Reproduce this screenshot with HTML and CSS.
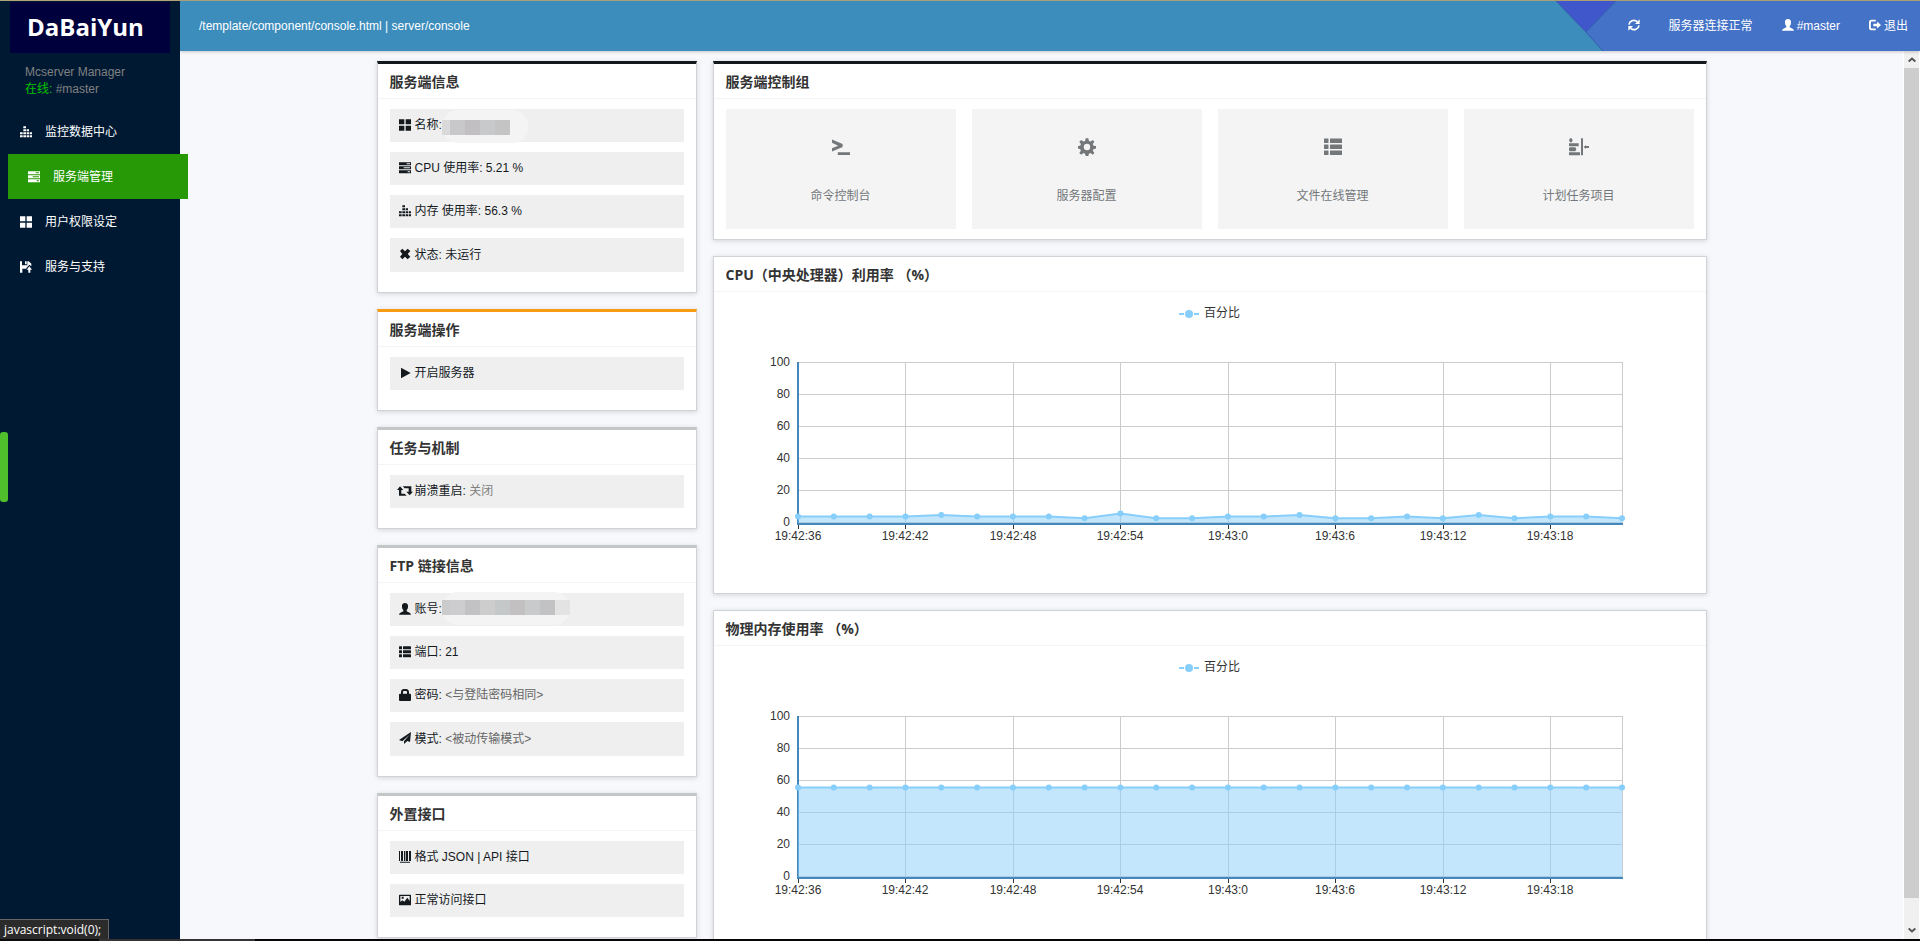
FILE: index.html
```html
<!DOCTYPE html>
<html lang="zh-CN">
<head>
<meta charset="utf-8">
<title>Mcserver Manager</title>
<link rel="stylesheet" href="styles.css">
</head>
<body>
<svg class="sprite" aria-hidden="true">
  <symbol id="i-equalizer" viewBox="0 0 36 36"><path d="M0 28h8v6H0zM0 19h8v6H0zM10 28h8v6h-8zM10 19h8v6h-8zM10 10h8v6h-8zM10 1h8v6h-8zM20 28h7v6h-7zM20 19h7v6h-7zM20 10h7v6h-7zM29 28h7v6h-7zM29 19h7v6h-7z"/></symbol>
  <symbol id="i-tasks" viewBox="0 0 36 36"><path fill-rule="evenodd" d="M0 1h36v9H0zM23 4v3h10V4zM0 13h36v9H0zM14 16v3h19v-3zM0 25h36v9H0zM26 28v3h7v-3z"/></symbol>
  <symbol id="i-grid" viewBox="0 0 36 36"><path d="M0 1h16v15H0zM20 1h16v15H20zM0 20h16v15H0zM20 20h16v15H20z"/></symbol>
  <symbol id="i-floppy" viewBox="0 0 36 36"><path d="M0 1h6v12h16V1h4l8 7v8l-6-5-9 10v2H7v12H0zM15 1h5v9h-5zM28 16l8 10h-5v9h-6v-9h-5z"/></symbol>
  <symbol id="i-refresh" viewBox="0 0 36 36"><path fill="none" stroke="currentColor" stroke-width="5" d="M3 17C4 7 17-1 28 8M33 19C32 29 19 37 8 28"/><path d="M35 1v14H21zM1 35V21h14z"/></symbol>
  <symbol id="i-user" viewBox="0 0 36 36"><path d="M18 0c6 0 10 4 9 11 0 5-2 8-4 10v4c3 2 12 4 13 10H0c1-6 10-8 13-10v-4c-2-2-4-5-4-10C8 4 12 0 18 0z"/></symbol>
  <symbol id="i-logout" viewBox="0 0 39 36"><path d="M22 1v6H10c-3 0-4 1-4 4v14c0 3 1 4 4 4h12v6H8c-6 0-8-3-8-8V9c0-5 2-8 8-8zM26 7l13 11-13 11v-7H14v-8h12z"/></symbol>
  <symbol id="i-remove" viewBox="0 0 36 36"><path d="M10 2l8 8 8-8 8 7-8 9 8 8-8 8-8-8-8 8-7-8 7-8-7-9z"/></symbol>
  <symbol id="i-play" viewBox="0 0 36 36"><path d="M6 2l29 16L6 34z"/></symbol>
  <symbol id="i-retweet" viewBox="0 0 48 36"><path d="M9 4l10 11h-6v11h10l6 6H6V15H0zM17 4h26v16h5L38 31 28 20h7V10H23z"/></symbol>
  <symbol id="i-list" viewBox="0 0 36 36"><path d="M1 1h7q1 0 1 1v7q0 1-1 1H1q-1 0-1-1V2q0-1 1-1zM13 1h22q1 0 1 1v7q0 1-1 1H13q-1 0-1-1V2q0-1 1-1zM1 13h7q1 0 1 1v7q0 1-1 1H1q-1 0-1-1v-7q0-1 1-1zM13 13h22q1 0 1 1v7q0 1-1 1H13q-1 0-1-1v-7q0-1 1-1zM1 25h7q1 0 1 1v7q0 1-1 1H1q-1 0-1-1v-7q0-1 1-1zM13 25h22q1 0 1 1v7q0 1-1 1H13q-1 0-1-1v-7q0-1 1-1z"/></symbol>
  <symbol id="i-lock" viewBox="0 0 36 36"><path fill-rule="evenodd" d="M6 14V9c0-5 4-9 9-9h6c5 0 9 4 9 9v5h3c2 0 3 1 3 3v16c0 2-1 3-3 3H3c-2 0-3-1-3-3V17c0-2 1-3 3-3zM12 14h12V9c0-2-1-3-3-3h-6c-2 0-3 1-3 3z"/></symbol>
  <symbol id="i-send" viewBox="0 0 36 36"><path d="M0 24L36 0 33 30 25 27 15 36V28L32 8 10 28z"/></symbol>
  <symbol id="i-barcode" viewBox="0 0 36 36"><path d="M0 0h3v30H0zM6 0h6v30H6zM15 0h3v30h-3zM20 0h7v30h-7zM30 0h6v30h-6zM3 32h30v3H3z"/></symbol>
  <symbol id="i-picture" viewBox="0 0 36 36"><path fill-rule="evenodd" d="M2 2h32q2 0 2 2v28q0 2-2 2H2q-2 0-2-2V4q0-2 2-2zM4 6v18l6-5 6 4 9-12 7 10V6zM8 8h6v6H8z"/></symbol>
  <symbol id="i-terminal" viewBox="0 0 56 56"><path d="M0 5l33 14v9L0 42v-10l19-8L0 15zM18 44h38v9H18z"/></symbol>
  <symbol id="i-cog" viewBox="0 0 56 56"><path fill-rule="evenodd" d="M24 1h8l2 8 5 2 7-5 5 6-5 7 2 5 8 1v8l-8 2-2 5 5 7-5 5-7-5-5 2-2 7h-8l-2-7-5-2-7 5-6-5 5-7-2-5-7-2v-8l7-1 2-5-5-7 6-6 7 5 5-2zM28 18a10 10 0 1 0 0 20a10 10 0 1 0 0-20z"/></symbol>
  <symbol id="i-schedule" viewBox="0 0 60 54"><path d="M3 1h5l3 6-3 6H3L0 7zM0 16h29v9H0zM2 28h17l3 6-3 6H2L0 37v-6zM0 43h33v9H0zM36 1h6v51h-6zM44 27l7-6v3h9v6h-9v3z"/></symbol>
  <symbol id="i-chevron" viewBox="0 0 24 16"><path fill="none" stroke="currentColor" stroke-width="6" d="M2 14l10-9 10 9"/></symbol>
</svg>

<div class="page">
  <div class="page__edge"></div>
  <div class="shell">
    <aside class="sidebar">
      <h1 class="logo">DaBaiYun</h1>
      <div class="account">
        <p>Mcserver Manager</p>
        <p><span class="account__state">在线:</span> #master</p>
      </div>
      <nav class="nav">
        <a class="nav__item" href="#"><svg class="icon"><use href="#i-equalizer"/></svg>监控数据中心</a>
        <a class="nav__item nav__item--active" href="#"><svg class="icon"><use href="#i-tasks"/></svg>服务端管理</a>
        <a class="nav__item" href="#"><svg class="icon"><use href="#i-grid"/></svg>用户权限设定</a>
        <a class="nav__item" href="#"><svg class="icon"><use href="#i-floppy"/></svg>服务与支持</a>
      </nav>
    </aside>

    <div class="body">
      <header class="topbar">
        <p class="topbar__path">/template/component/console.html | server/console</p>
        <svg class="topbar__slant" viewBox="0 0 60 50" aria-hidden="true">
          <path fill="#4472c7" d="M0 0h60v50H47z"/>
          <path fill="#3f57cb" d="M0 0h60L30 31z"/>
          <path fill="none" stroke="#3560a8" d="M0 0l30 31 17 19M60 0L30 31"/>
        </svg>
        <div class="topbar__actions">
          <button class="action" aria-label="刷新"><svg class="icon"><use href="#i-refresh"/></svg></button>
          <span class="action">服务器连接正常</span>
          <a class="action" href="#"><svg class="icon"><use href="#i-user"/></svg>#master</a>
          <a class="action" href="#"><svg class="icon"><use href="#i-logout"/></svg>退出</a>
        </div>
      </header>

      <div class="viewport">
        <main class="content">
          <div class="columns">
            <div class="stack">
              <section class="card card--dark">
                <h2 class="card__title">服务端信息</h2>
                <ul class="rows">
                  <li class="row"><svg class="icon"><use href="#i-grid"/></svg>名称:<span class="mask mask--name"></span></li>
                  <li class="row"><svg class="icon"><use href="#i-tasks"/></svg>CPU 使用率: 5.21 %</li>
                  <li class="row"><svg class="icon"><use href="#i-equalizer"/></svg>内存 使用率: 56.3 %</li>
                  <li class="row"><svg class="icon"><use href="#i-remove"/></svg>状态: 未运行</li>
                </ul>
              </section>
              <section class="card card--orange">
                <h2 class="card__title">服务端操作</h2>
                <ul class="rows">
                  <li><button class="row"><svg class="icon"><use href="#i-play"/></svg>开启服务器</button></li>
                </ul>
              </section>
              <section class="card card--grey">
                <h2 class="card__title">任务与机制</h2>
                <ul class="rows">
                  <li><button class="row"><svg class="icon icon--wide"><use href="#i-retweet"/></svg>崩溃重启:&nbsp;<span class="dim">关闭</span></button></li>
                </ul>
              </section>
              <section class="card card--grey">
                <h2 class="card__title">FTP 链接信息</h2>
                <ul class="rows">
                  <li class="row"><svg class="icon"><use href="#i-user"/></svg>账号:<span class="mask mask--user"></span></li>
                  <li class="row"><svg class="icon"><use href="#i-list"/></svg>端口: 21</li>
                  <li class="row"><svg class="icon"><use href="#i-lock"/></svg>密码:&nbsp;<span class="note">&lt;与登陆密码相同&gt;</span></li>
                  <li class="row"><svg class="icon"><use href="#i-send"/></svg>模式:&nbsp;<span class="note">&lt;被动传输模式&gt;</span></li>
                </ul>
              </section>
              <section class="card card--grey">
                <h2 class="card__title">外置接口</h2>
                <ul class="rows">
                  <li><a class="row" href="#"><svg class="icon"><use href="#i-barcode"/></svg>格式 JSON | API 接口</a></li>
                  <li><a class="row" href="#"><svg class="icon"><use href="#i-picture"/></svg>正常访问接口</a></li>
                </ul>
              </section>
            </div>

            <div class="stack">
              <section class="card card--dark">
                <h2 class="card__title">服务端控制组</h2>
                <div class="tiles">
                  <button class="tile"><svg class="tile__icon"><use href="#i-terminal"/></svg>命令控制台</button>
                  <button class="tile"><svg class="tile__icon"><use href="#i-cog"/></svg>服务器配置</button>
                  <button class="tile"><svg class="tile__icon"><use href="#i-list"/></svg>文件在线管理</button>
                  <button class="tile"><svg class="tile__icon"><use href="#i-schedule"/></svg>计划任务项目</button>
                </div>
              </section>
              <section class="card">
                <h2 class="card__title">CPU（中央处理器）利用率 （%）</h2>
                <svg class="chart" viewBox="0 0 992 301" data-values="4,4,4,4,5,4,4,4,3,6,3,3,4,4,5,3,3,4,3,5,3,4,4,3"></svg>
              </section>
              <section class="card">
                <h2 class="card__title">物理内存使用率 （%）</h2>
                <svg class="chart" viewBox="0 0 992 301" data-values="56,56,56,56,56,56,56,56,56,56,56,56,56,56,56,56,56,56,56,56,56,56,56,56"></svg>
              </section>
            </div>
          </div>
        </main>
        <div class="scrollbar" aria-hidden="true">
          <svg class="scrollbar__arrow"><use href="#i-chevron"/></svg>
          <div class="scrollbar__thumb"></div>
          <svg class="scrollbar__arrow scrollbar__arrow--down"><use href="#i-chevron"/></svg>
        </div>
      </div>
    </div>
  </div>
  <div class="page__foot"></div>
  <div class="drawer-tab"></div>
  <div class="status">javascript:void(0);</div>
</div>
<script src="chart.js"></script>
</body>
</html>
```
FILE: styles.css
```css
* { box-sizing: border-box; }

body {
  margin: 0;
  font-family: "Liberation Sans", "Noto Sans CJK SC", sans-serif;
  font-size: 12px;
  line-height: 17px;
  color: #14191e;
}

h1, h2, p, ul { margin: 0; padding: 0; }
ul { list-style: none; }
a { color: inherit; text-decoration: none; }
button {
  margin: 0;
  border: 0;
  background: none;
  font: inherit;
  color: inherit;
  text-align: left;
  cursor: pointer;
}

.sprite { display: none; }
.icon {
  flex: none;
  width: 12px;
  height: 12px;
  margin-bottom: 2px;
  fill: currentColor;
}
.icon--wide { width: 16px; margin-right: -2px; margin-left: -2px; }

.page {
  position: relative;
  display: flex;
  flex-direction: column;
  height: 100vh;
  overflow: hidden;
}
.page__edge { flex: none; height: 1px; background: #b0a478; }
.page__foot {
  flex: none;
  height: 2px;
  background: linear-gradient(90deg, #0c0c0c 99px, #333 99px, #333 255px, #050505 255px);
}

.shell { display: flex; flex: 1; min-height: 0; }

/* sidebar */
.sidebar {
  position: relative;
  z-index: 1;
  flex: none;
  width: 180px;
  padding-top: 1px;
  background: #001933;
}
.logo {
  height: 51px;
  margin: 0 10px;
  padding-left: 17px;
  background: #00003c;
  color: #fff;
  font: 700 24px/50px "Open Sans", sans-serif;
}
.account { padding: 11px 25px; color: #808080; }
.account__state { color: #00c400; }
.nav__item {
  display: flex;
  align-items: center;
  gap: 13px;
  height: 45px;
  padding: 2px 0 0 20px;
  color: #fff;
}
.nav__item--active {
  margin: 0 -8px 0 8px;
  background: #289906;
}

/* top bar */
.body { display: flex; flex: 1; flex-direction: column; min-width: 0; }
.topbar {
  position: relative;
  display: flex;
  flex: none;
  align-items: center;
  height: 50px;
  background: #3c8dbc;
  color: #fff;
  box-shadow: 0 1px 3px rgba(0, 0, 0, .2);
}
.topbar__path { flex: 1; padding-left: 19px; }
.topbar__slant { width: 60px; height: 50px; }
.topbar__actions {
  display: flex;
  align-items: center;
  gap: 29px;
  height: 50px;
  padding: 0 12px;
  background: #4472c7;
}
.action { display: flex; align-items: center; gap: 3px; padding: 0; }

/* content */
.viewport { display: flex; flex: 1; min-height: 0; }
.content {
  flex: 1;
  min-width: 0;
  overflow: hidden;
  padding: 10px 16px 0;
  background: #f7f8fc;
}
.columns {
  display: grid;
  grid-template-columns: 320px minmax(0, 1fr);
  gap: 16px;
  align-items: start;
  max-width: 1330px;
  margin: 0 auto;
}
.stack { display: grid; gap: 16px; }

.card {
  border: 1px solid #cfd2d6;
  background: #fff;
  box-shadow: 0 1px 5px rgba(0, 0, 0, .15);
}
.card--dark { border-top: 3px solid #14191e; }
.card--orange { border-top: 3px solid #f79c14; }
.card--grey { border-top: 3px solid #c4c7c8; }
.card__title {
  height: 35px;
  padding: 0 12px;
  border-bottom: 1px solid #f4f4f4;
  color: #333;
  font: 700 14px/36px "Open Sans", "Noto Sans CJK SC", sans-serif;
}

.rows { display: grid; gap: 10px; padding: 10px 12px 20px; }
.row {
  display: flex;
  align-items: center;
  gap: 4px;
  width: 100%;
  height: 33px;
  padding: 0 9px;
  background: #efefef;
}
.row:nth-child(4) { height: 34px; }
.row .dim, .row .note { margin-left: -4px; }
.dim { color: #808080; }
.note { color: #666; }

.mask { position: relative; height: 15px; margin-left: -4px; }
.mask::before {
  content: "";
  position: absolute;
  inset: -10px -18px -8px 0;
  border-radius: 16px;
  background: #f4f4f4;
}
.mask::after {
  content: "";
  position: absolute;
  inset: 0;
}
.mask--name { width: 68px; margin-top: 4px; }
.mask--name::after {
  background: linear-gradient(90deg, #d9d9d9 8px, #c8c8ca 8px, #c8c8ca 23px, #c2bfc2 23px, #c2bfc2 38px, #c8c9cb 38px, #c8c9cb 53px, #c4c4c4 53px);
}
.mask--user { width: 128px; margin-bottom: 4px; }
.mask--user::before { inset: -8px 0 -10px; }
.mask--user::after {
  background: linear-gradient(90deg, #cbcbcb 8px, #cdcdcf 8px, #cdcdcf 23px, #c2c2c4 23px, #c2c2c4 38px, #cdcdce 38px, #cdcdce 53px, #c5c8c9 53px, #c5c8c9 68px, #c3c0c2 68px, #c3c0c2 83px, #c9cacb 83px, #c9cacb 98px, #c2c2c4 98px, #c2c2c4 113px, #e3e3e3 113px);
}

.tiles {
  display: grid;
  grid-template-columns: repeat(4, 1fr);
  gap: 16px;
  padding: 10px 12px;
}
.tile {
  display: flex;
  flex-direction: column;
  align-items: center;
  gap: 32px;
  height: 120px;
  padding: 29px 0 0;
  background: #f4f4f4;
  color: #73777a;
}
.tile__icon { width: 20px; height: 18px; fill: currentColor; }

/* charts */
.chart { display: block; width: 100%; }
.chart text { font-size: 12px; fill: #333; }
.chart .end { text-anchor: end; }
.chart .mid { text-anchor: middle; }
.chart .grid { fill: #ccc; shape-rendering: crispEdges; }
.chart .axis { fill: #4488bb; shape-rendering: crispEdges; }
.chart .tick { fill: #333; shape-rendering: crispEdges; }
.chart .area { fill: #87cefa; fill-opacity: .5; }
.chart .line { fill: none; stroke: #87cefa; stroke-width: 2; }
.chart .dot { fill: #87cefa; }

/* scrollbar */
.scrollbar {
  display: flex;
  flex: none;
  flex-direction: column;
  align-items: center;
  width: 17px;
  border: solid #fff;
  border-width: 0 1px;
  background: #f0f0f0;
  color: #555;
}
.scrollbar__arrow { flex: none; width: 8px; height: 17px; }
.scrollbar__arrow--down { transform: rotate(180deg); }
.scrollbar__thumb { flex: none; width: 100%; height: calc(100% - 58px); margin-bottom: 24px; background: #cdcdcd; }

/* overlays */
.drawer-tab {
  position: absolute;
  z-index: 2;
  left: 0;
  top: 432px;
  width: 8px;
  height: 70px;
  border-radius: 3px;
  background: #4fc02b;
}
.status {
  position: absolute;
  z-index: 2;
  left: 0;
  bottom: 2px;
  height: 20px;
  padding: 0 7px 0 4px;
  border: solid #666;
  border-width: 1px 1px 0 0;
  background: #2b2b2b;
  color: #fff;
  font: 12px/19px "Open Sans", sans-serif;
}
```
FILE: chart.js
```javascript
// Draws each area chart from its data-values list (one sample every two seconds).
const LEFT = 84, TOP = 70, WIDTH = 824, HEIGHT = 160;
const TIMES = ["19:42:36", "19:42:42", "19:42:48", "19:42:54", "19:43:0", "19:43:6", "19:43:12", "19:43:18"];

document.querySelectorAll(".chart").forEach((svg) => {
  const values = svg.dataset.values.split(",").map(Number);
  const base = TOP + HEIGHT;
  const x = (i) => LEFT + (WIDTH * i) / (values.length - 1);
  const y = (v) => base + 1 - (HEIGHT * v) / 100;
  const rect = (cls, rx, ry, w, h) => `<rect class="${cls}" x="${rx}" y="${ry}" width="${w}" height="${h}"/>`;
  let out = "";

  for (let v = 0; v <= 100; v += 20) {
    const gy = base - (HEIGHT * v) / 100;
    out += rect("grid", LEFT, gy, WIDTH + 1, 1);
    out += `<text class="end" x="${LEFT - 8}" y="${gy + 4}">${v}</text>`;
  }
  TIMES.forEach((time, i) => {
    const gx = Math.round(x(i * 3));
    out += rect("grid", gx, TOP, 1, HEIGHT);
    out += rect("tick", gx, base + 3, 1, 4);
    out += `<text class="mid" x="${gx}" y="${base + 18}">${time}</text>`;
  });
  out += rect("grid", LEFT + WIDTH, TOP, 1, HEIGHT);
  out += rect("axis", LEFT - 1, TOP, 2, HEIGHT + 3);
  out += rect("axis", LEFT - 1, base + 1, WIDTH + 2, 2);

  const points = values.map((v, i) => `${x(i)},${y(v)}`).join(" ");
  out += `<polygon class="area" points="${LEFT},${base + 1} ${points} ${LEFT + WIDTH},${base + 1}"/>`;
  out += `<polyline class="line" points="${points}"/>`;
  values.forEach((v, i) => { out += `<circle class="dot" cx="${x(i)}" cy="${y(v)}" r="3"/>`; });

  out += rect("dot", 465, 21, 5, 2) + rect("dot", 480, 21, 5, 2);
  out += `<circle class="dot" cx="475" cy="22" r="4"/><text x="490" y="25">百分比</text>`;
  svg.innerHTML = out;
});
```
